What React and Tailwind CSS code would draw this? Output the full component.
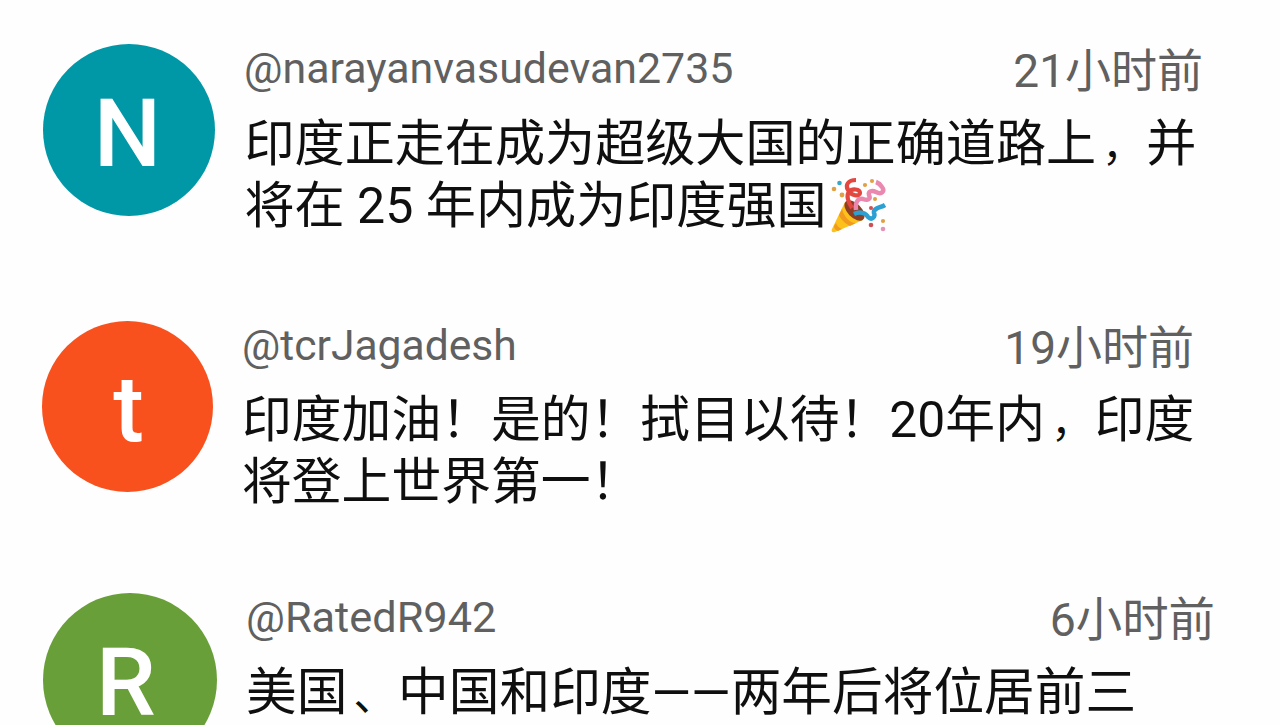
import React from 'react';

const comments = [
  {
    user: '@narayanvasudevan2735',
    time: '21小时前',
    initial: 'N',
    lines: ['印度正走在成为超级大国的正确道路上，并', '将在 25 年内成为印度强国'],
    party: true,
    row: 'h-[277px] pl-[43px]',
    avatar: 'size-[172px] bg-[#0097a7]',
    letter: 'text-[95px] pt-[8px] pr-[3px]',
    content: 'ml-[29px]',
    head: 'h-[69px] w-[959px]',
    name: 'text-[42.9px] leading-[49px]',
    when: 'text-[46px]',
    body: 'pl-[0.5px] text-[50.1px]',
  },
  {
    user: '@tcrJagadesh',
    time: '19小时前',
    initial: 't',
    lines: ['印度加油！是的！拭目以待！20年内，印度', '将登上世界第一！'],
    row: 'h-[272px] pl-[42px]',
    avatar: 'size-[171px] bg-[#f9511e]',
    letter: 'text-[92px] pt-[6px] pl-[2px]',
    content: 'ml-[29px]',
    head: 'h-[68px] w-[952px]',
    name: 'text-[42.6px] leading-[49px]',
    when: 'text-[46px]',
    body: 'text-[49.8px]',
  },
  {
    user: '@RatedR942',
    time: '6小时前',
    initial: 'R',
    lines: ['美国、中国和印度——两年后将位居前三'],
    row: 'h-[132px] pl-[43px]',
    avatar: 'size-[174px] bg-[#689f38]',
    letter: 'text-[95px] pt-[6px] pr-[8px]',
    content: 'ml-[29px]',
    head: 'h-[69px] w-[969px]',
    name: 'text-[43.3px] leading-[50px]',
    when: 'text-[46.4px]',
    body: 'text-[50.7px]',
  },
];

function PartyPopper() {
  return (
    <svg viewBox="0 0 58 58" className="ml-[3px] size-[58px] shrink-0" fill="none">
      <path d="M15 25 C18 23 34 38 33 43 L5 55 C2 56 1 54 2 52 Z" fill="#fcc21b" />
      <path d="M12 32 C14 40 20 46 26 46 L20 49 C14 46 10 41 9 38 Z M6 46 C7 49 9 51 12 52 L8 54 C5 53 4 51 4 49 Z" fill="#f29a1f" />
      <ellipse cx="24.500" cy="33.500" rx="7" ry="12.500" transform="rotate(-44 24.500 33.500)" fill="#8c3f25" />
      <path d="M22 31 C18 25 16 18 19 15 C22 11 30 12 30 16 C30 20 21 19 18 13 C15 8 18 3 26 3" stroke="#e34840" strokeWidth="4.200" />
      <path d="M26 33 C25 25 28 21 33 22 C38 24 41 22 39 18 C38 14 42 13 46 15 C52 18 55 14 52 10 C50 7 49 6 46 5" stroke="#ea88b0" strokeWidth="4.500" />
      <path d="M24 37 C30 34 36 36 38 40 C42 44 46 39 44 36 C43 31 50 31 55 28" stroke="#2ba0d2" strokeWidth="4.500" />
      <g fill="#e0a043">
        <circle cx="4" cy="12" r="2.300" />
        <circle cx="12" cy="18" r="2.400" />
        <circle cx="35" cy="8" r="2.100" />
        <circle cx="42" cy="4" r="2.100" />
        <circle cx="45" cy="22" r="2" />
        <circle cx="53" cy="44" r="2.100" />
      </g>
      <circle cx="9.500" cy="6" r="2.300" fill="#35a7c9" />
      <g fill="#cf4f57">
        <circle cx="41" cy="31" r="2" />
        <circle cx="41" cy="48" r="2.300" />
      </g>
      <circle cx="53" cy="52" r="2.300" fill="#e592ba" />
    </svg>
  );
}

// commas sit a little further into their square and are drawn lighter
function Line({ text }) {
  return (
    <span>
      {text.split(/([，、])/).map((part, i) =>
        part === '，' || part === '、' ? (
          <span key={i} className="inline-block w-[1em] leading-none">
            <span className="pl-[6px] text-[0.84em]">{part}</span>
          </span>
        ) : (
          part
        )
      )}
    </span>
  );
}

function Comment({ item }) {
  return (
    <article className={`flex items-start overflow-hidden ${item.row}`}>
      <div className={`flex shrink-0 items-center justify-center rounded-full ${item.avatar}`}>
        <span className={`font-medium leading-[0.8] text-white blur-[0.7px] ${item.letter}`}>{item.initial}</span>
      </div>

      <div className={`shrink-0 ${item.content}`}>
        <header className={`flex items-start justify-between text-[#606060] ${item.head}`}>
          <span className={item.name}>{item.user}</span>
          <time className={`leading-[55px] ${item.when}`}>{item.time}</time>
        </header>

        {item.lines.map((line, i) => (
          <p key={line} className={`flex h-[62px] items-center whitespace-pre leading-[62px] text-[#0f0f0f] ${item.body}`}>
            <Line text={line} />
            {item.party && i === 1 && <PartyPopper />}
          </p>
        ))}
      </div>
    </article>
  );
}

function App() {
  return (
    <main
      lang="zh-CN"
      className="h-[725px] w-[1280px] overflow-hidden bg-[#fefefe] pt-[44px] font-['Roboto','Noto_Sans_CJK_SC',sans-serif]"
    >
      {comments.map((item) => (
        <Comment key={item.user} item={item} />
      ))}
    </main>
  );
}

export default App;
